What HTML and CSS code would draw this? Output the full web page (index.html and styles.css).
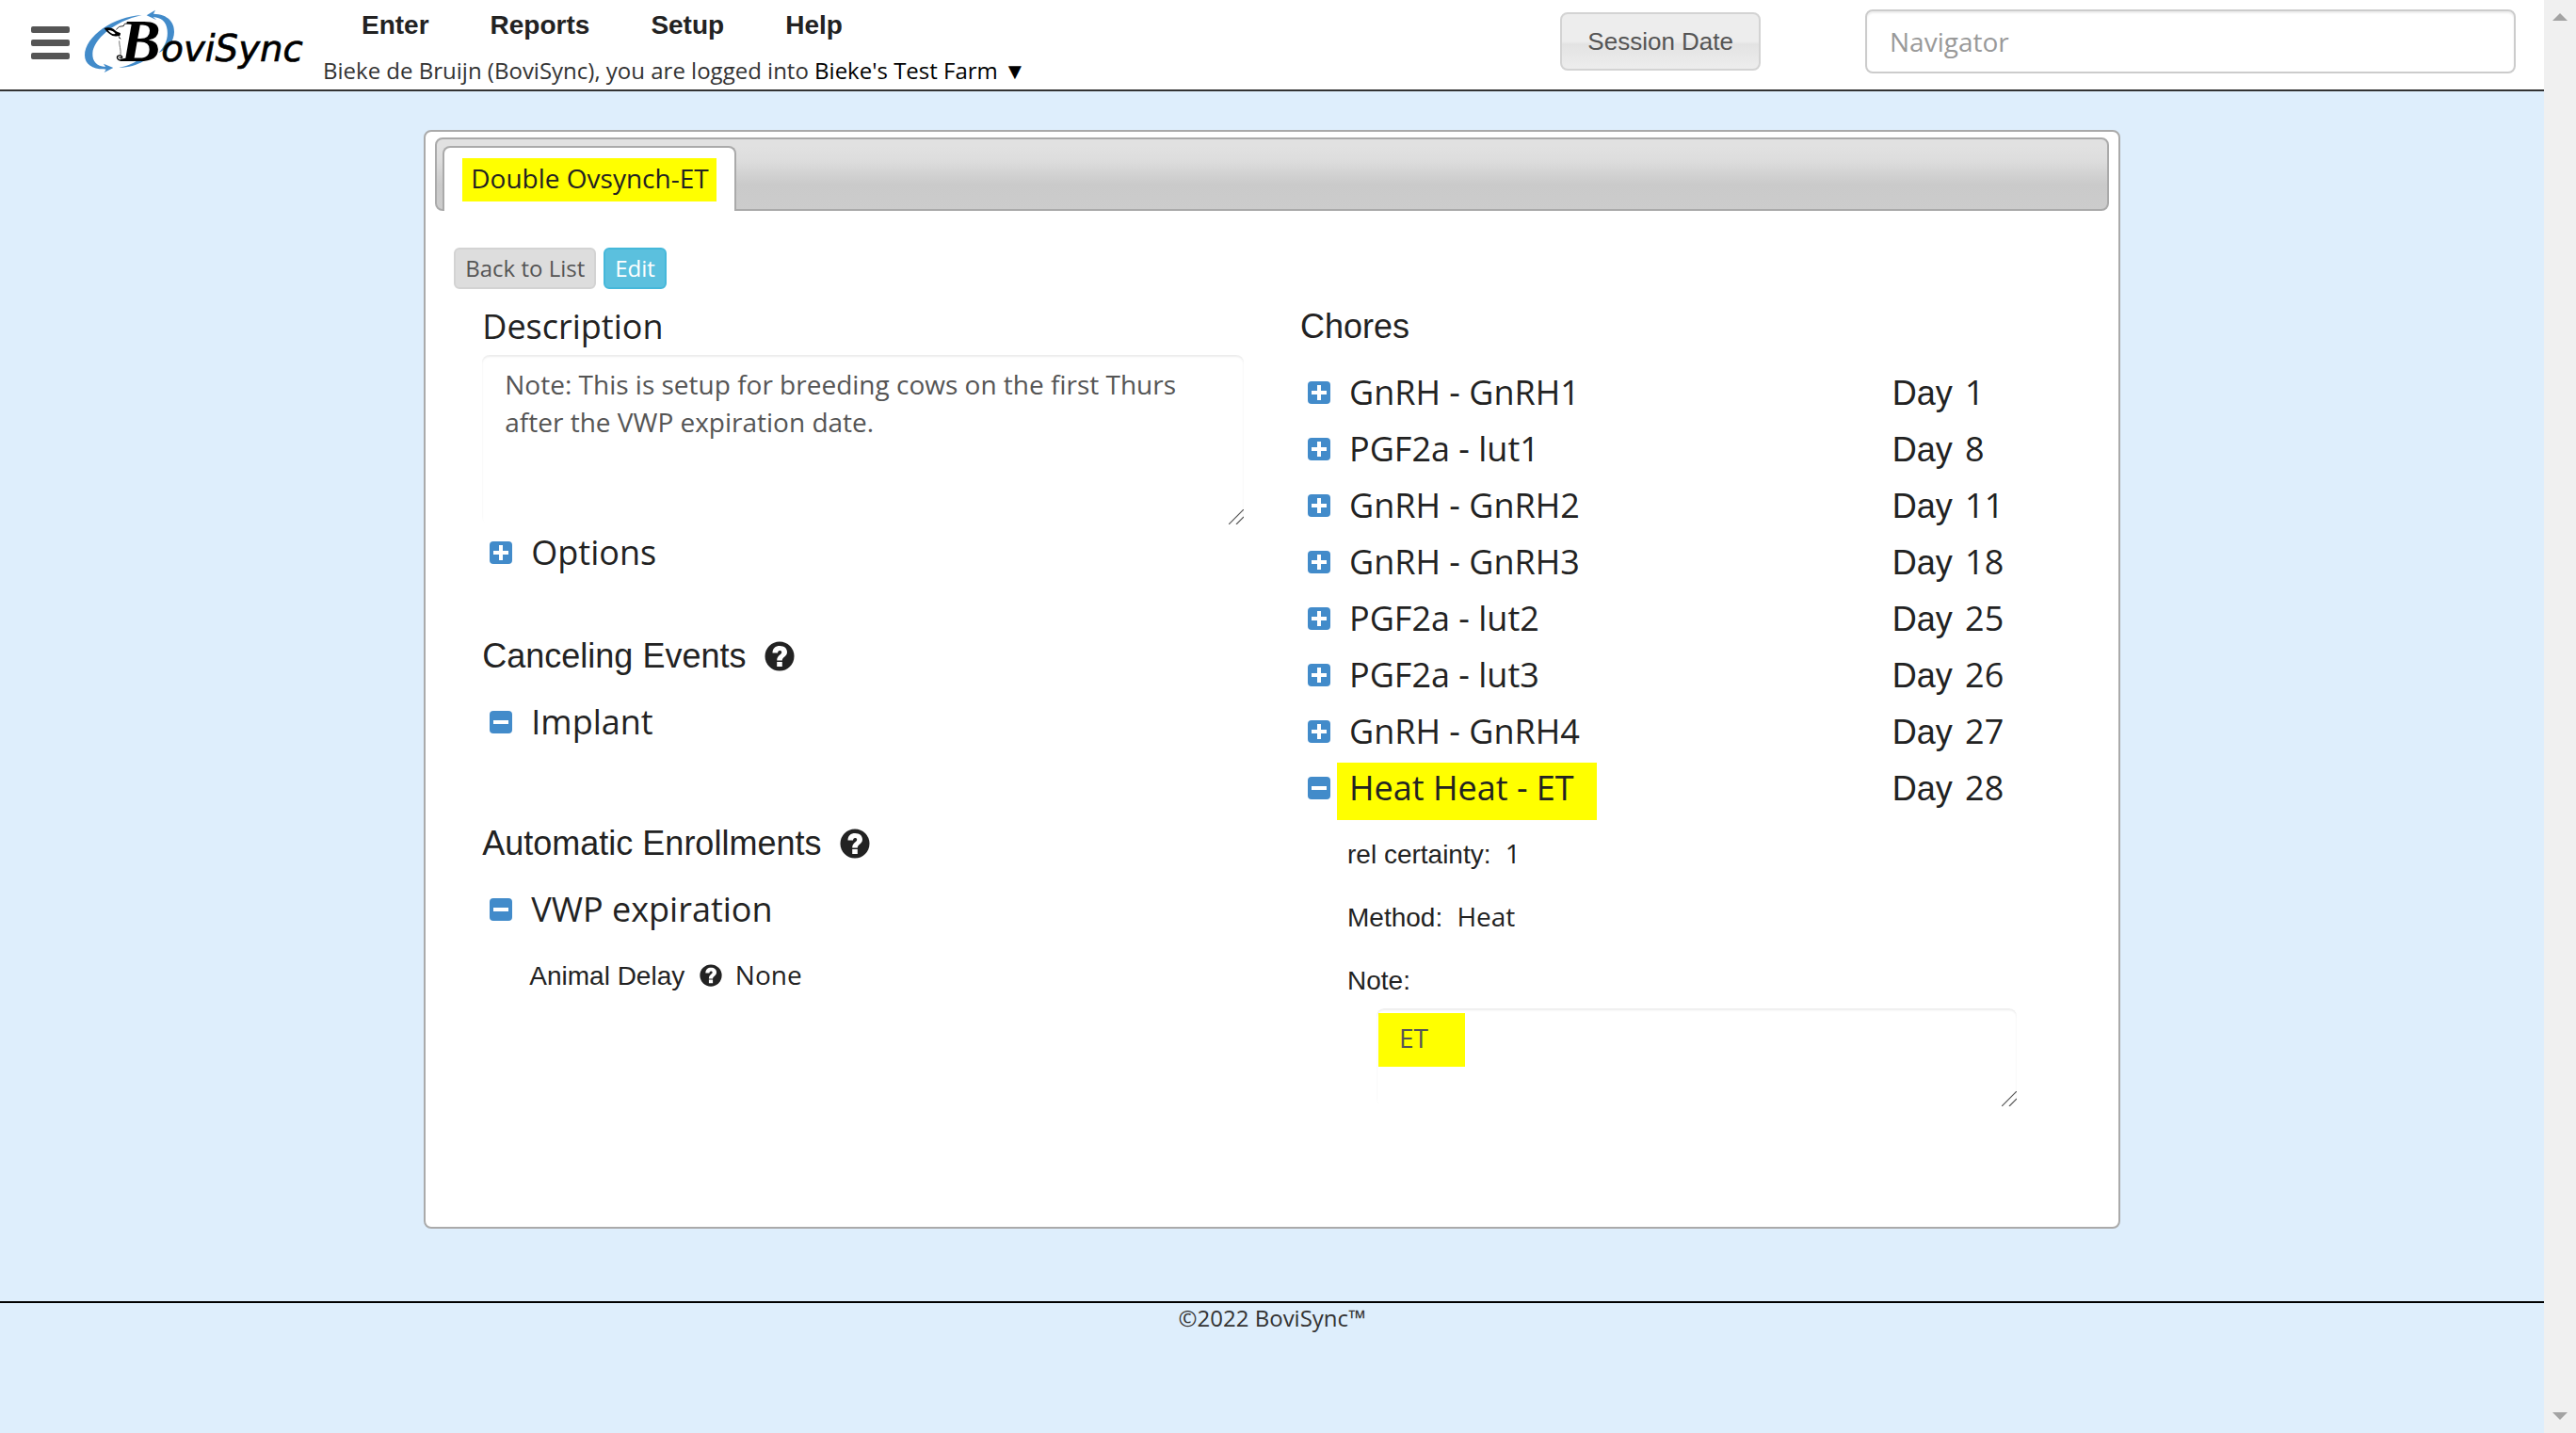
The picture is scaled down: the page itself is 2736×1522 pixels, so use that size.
FILE: index.html
```html
<!DOCTYPE html>
<html lang="en">
<head>
    <meta charset="UTF-8">
    <meta name="viewport" content="width=device-width, initial-scale=1.0">
    <title>BoviSync</title>
    <link rel="stylesheet" href="styles.css">
</head>
<body>
    <svg class="sprite" aria-hidden="true">
        <symbol id="plus" viewBox="0 0 24 24">
            <rect width="24" height="24" rx="4" fill="#428bca"/>
            <path d="M10 4h4v6h6v4h-6v6h-4v-6H4v-4h6z" fill="#fff"/>
        </symbol>
        <symbol id="minus" viewBox="0 0 24 24">
            <rect width="24" height="24" rx="4" fill="#428bca"/>
            <path d="M4 10h16v4H4z" fill="#fff"/>
        </symbol>
        <symbol id="help" viewBox="0 0 32 32">
            <circle cx="16" cy="16" r="15.5" fill="#222"/>
            <path d="M8.5 12.5C8.5 7.5 11.500 5 16.300 5C21 5 24 7.800 24 11.500C24 16.500 18.800 16.800 18.800 20.500H13.200C13.200 15 18.200 14.500 18.200 11.800C18.200 10.600 17.400 10 16.200 10C14.800 10 14.200 11 14 12.500zM13.200 22h5.600v5h-5.600z" fill="#fff"/>
        </symbol>
        <symbol id="grip" viewBox="0 0 16 16">
            <path d="M0 16L16 0M8 16L16 8" stroke="#555" stroke-width="1.2" fill="none"/>
        </symbol>
    </svg>

    <div class="page">
        <header class="topbar">
            <button class="menu-toggle" aria-label="Menu">
                <span></span>
                <span></span>
                <span></span>
            </button>
            <a class="logo" href="#" aria-label="BoviSync">
                <svg width="240" height="76" viewBox="0 0 720 228">
                    <g fill="#428bca">
                        <path d="M200 30C110 34 18 98 18 158C18 186 42 202 78 202L86 203L80 213L109 198L78 185L84 195C56 192 42 178 43 152C46 108 110 50 200 30z"/>
                        <path d="M215 31L243 14L237 26C284 27 304 54 303 84C302 112 288 134 254 150C276 126 284 104 281 78C278 50 262 38 236 36L247 46z"/>
                        <path d="M126 198C160 196 182 190 206 176L186 174C170 186 152 192 126 198z"/>
                    </g>
                    <path d="M122 72L145 58L180 56L176 170L136 172L126 120z" fill="#fff"/>
                    <path d="M80 72C92 68 106 70 114 78C120 84 126 84 132 88C132 96 128 100 124 96C110 102 92 90 80 72zM92 78C98 88 108 92 116 90C112 82 102 78 92 78z" fill-rule="evenodd"/>
                    <path d="M118 76L128 67L141 65M141 66L145 58L172 55" fill="none" stroke="#000" stroke-width="2.500"/>
                    <path d="M125 97L131 103L134 107L128 104z"/>
                    <path d="M128 112C128 128 134 140 132 157" fill="none" stroke="#555" stroke-width="2.500"/>
                    <path d="M136 173C124 176 118 166 124 160C132 156 140 162 136 168M128 166h6M134 174L160 172" fill="none" stroke="#000" stroke-width="4"/>
                    <text class="logo-initial" x="132" y="177">B</text>
                    <text class="logo-name" x="262" y="177">oviSync</text>
                </svg>
            </a>
            <div class="topbar-middle">
                <nav class="main-nav">
                    <a href="#">Enter</a>
                    <a href="#">Reports</a>
                    <a href="#">Setup</a>
                    <a href="#">Help</a>
                </nav>
                <p class="login-info">Bieke de Bruijn (BoviSync), you are logged into <a href="#">Bieke's Test Farm ▼</a></p>
            </div>
            <button class="session-date">Session Date</button>
            <input class="navigator" type="text" placeholder="Navigator" aria-label="Navigator">
        </header>

        <main class="panel">
            <div class="tabs">
                <a class="tab" href="#"><mark>Double Ovsynch-ET</mark></a>
            </div>
            <div class="panel-body">
                <div class="actions">
                    <button class="btn btn-default">Back to List</button>
                    <button class="btn btn-info">Edit</button>
                </div>
                <div class="columns">
                    <section class="column">
                        <h4><label for="description">Description</label></h4>
                        <div class="textarea-wrap">
                            <textarea id="description" class="description" readonly>Note: This is setup for breeding cows on the first Thurs after the VWP expiration date.</textarea>
                            <svg class="grip"><use href="#grip"/></svg>
                        </div>
                        <div class="item">
                            <button class="toggle" aria-label="Expand"><svg><use href="#plus"/></svg></button>
                            <span>Options</span>
                        </div>

                        <h4 class="arial canceling">Canceling Events <svg class="help"><use href="#help"/></svg></h4>
                        <div class="item">
                            <button class="toggle" aria-label="Collapse"><svg><use href="#minus"/></svg></button>
                            <span>Implant</span>
                        </div>

                        <h4 class="arial enrollments">Automatic Enrollments <svg class="help"><use href="#help"/></svg></h4>
                        <div class="item">
                            <button class="toggle" aria-label="Collapse"><svg><use href="#minus"/></svg></button>
                            <span>VWP expiration</span>
                        </div>
                        <div class="details">
                            <p><b>Animal Delay</b> <svg class="help-small"><use href="#help"/></svg> <span>None</span></p>
                        </div>
                    </section>

                    <section class="column">
                        <h4 class="arial chores">Chores</h4>
                        <div class="item">
                            <button class="toggle" aria-label="Expand"><svg><use href="#plus"/></svg></button>
                            <span>GnRH - GnRH1</span>
                            <span class="day"><b>Day</b> 1</span>
                        </div>
                        <div class="item">
                            <button class="toggle" aria-label="Expand"><svg><use href="#plus"/></svg></button>
                            <span>PGF2a - lut1</span>
                            <span class="day"><b>Day</b> 8</span>
                        </div>
                        <div class="item">
                            <button class="toggle" aria-label="Expand"><svg><use href="#plus"/></svg></button>
                            <span>GnRH - GnRH2</span>
                            <span class="day"><b>Day</b> 11</span>
                        </div>
                        <div class="item">
                            <button class="toggle" aria-label="Expand"><svg><use href="#plus"/></svg></button>
                            <span>GnRH - GnRH3</span>
                            <span class="day"><b>Day</b> 18</span>
                        </div>
                        <div class="item">
                            <button class="toggle" aria-label="Expand"><svg><use href="#plus"/></svg></button>
                            <span>PGF2a - lut2</span>
                            <span class="day"><b>Day</b> 25</span>
                        </div>
                        <div class="item">
                            <button class="toggle" aria-label="Expand"><svg><use href="#plus"/></svg></button>
                            <span>PGF2a - lut3</span>
                            <span class="day"><b>Day</b> 26</span>
                        </div>
                        <div class="item">
                            <button class="toggle" aria-label="Expand"><svg><use href="#plus"/></svg></button>
                            <span>GnRH - GnRH4</span>
                            <span class="day"><b>Day</b> 27</span>
                        </div>
                        <div class="item">
                            <button class="toggle" aria-label="Collapse"><svg><use href="#minus"/></svg></button>
                            <span><mark>Heat Heat - ET</mark></span>
                            <span class="day"><b>Day</b> 28</span>
                        </div>
                        <div class="details">
                            <p><b>rel certainty:</b> <span>1</span></p>
                            <p><b>Method:</b> <span>Heat</span></p>
                            <p><label for="note">Note:</label></p>
                            <div class="textarea-wrap note-wrap">
                                <textarea id="note" class="note" readonly>ET</textarea>
                                <svg class="grip"><use href="#grip"/></svg>
                            </div>
                        </div>
                    </section>
                </div>
            </div>
        </main>

        <footer>©2022 BoviSync™</footer>
    </div>

    <div class="scrollbar" aria-hidden="true">
        <svg width="16" height="8" viewBox="0 0 16 8"><path d="M0 8L8 0L16 8z" fill="#a3a3a3"/></svg>
        <svg width="16" height="8" viewBox="0 0 16 8"><path d="M0 0L8 8L16 0z" fill="#a3a3a3"/></svg>
    </div>
</body>
</html>
```
FILE: styles.css
```css
* {
    box-sizing: border-box;
}

body {
    margin: 0;
    display: flex;
    min-height: 100vh;
    background-color: #deeefc;
    color: #222;
    font-family: "Open Sans", sans-serif;
    font-size: 28px;
    line-height: 40px;
}

a {
    color: inherit;
    text-decoration: none;
}

p, h4 {
    margin: 0;
}

button, input, textarea {
    font-family: inherit;
    font-size: inherit;
}

button {
    cursor: pointer;
}

mark {
    background-color: #ff0;
    color: inherit;
}

.sprite {
    position: absolute;
    width: 0;
    height: 0;
}

.page {
    flex: 1;
    min-width: 0;
}

/* top bar */
.topbar {
    display: flex;
    align-items: flex-start;
    height: 97px;
    padding-right: 30px;
    background-color: #fff;
    border-bottom: 2px solid #333;
}

.menu-toggle {
    display: flex;
    flex-direction: column;
    gap: 7px;
    margin: 28px 10px 0 33px;
    padding: 0;
    border: 0;
    background: none;
}

.menu-toggle span {
    width: 41px;
    height: 7px;
    border-radius: 2px;
    background-color: #555;
}

.logo {
    margin-top: 6px;
}

.logo svg {
    display: block;
}

.logo-initial {
    font: italic bold 192px "Liberation Serif", serif;
}

.logo-name {
    font: italic 116px "DejaVu Sans", sans-serif;
    stroke: #000;
    stroke-width: 2px;
}

.topbar-middle {
    flex: 1;
    padding: 7px 0 0 19px;
}

.main-nav {
    display: flex;
    gap: 65px;
    padding-left: 41px;
    font: bold 28px/40px "Liberation Sans", sans-serif;
}

.login-info {
    margin-top: 8px;
    font-size: 24px;
    color: #333;
}

.login-info a {
    color: #000;
}

.session-date {
    height: 62px;
    margin: 13px 111px 0 0;
    padding: 0 27px;
    border: 2px solid #d3d3d3;
    border-radius: 8px;
    background: linear-gradient(#ededed 50%, #e3e3e3 55%, #ededed);
    color: #555;
    font: 26px "Liberation Sans", sans-serif;
}

.navigator {
    width: 691px;
    height: 68px;
    margin-top: 10px;
    padding: 0 24px;
    border: 2px solid #ccc;
    border-radius: 8px;
    box-shadow: inset 0 2px 2px rgba(0, 0, 0, 0.075);
}

.navigator::placeholder {
    color: #999;
}

/* main panel */
.panel {
    width: 66.67%;
    margin: 41px auto 77px;
    padding: 6px 10px 128px;
    background-color: #fff;
    border: 2px solid #aaa;
    border-radius: 8px;
}

.tabs {
    display: flex;
    align-items: flex-end;
    height: 78px;
    padding: 7px 6px 0;
    border: 2px solid #aaa;
    border-radius: 8px;
    background: linear-gradient(#e1e1e1 10%, #ddd 30%, #cacaca 65%, #ccc);
}

.tab {
    height: 69px;
    margin-bottom: -2px;
    padding: 11px 19px;
    border: 2px solid #aaa;
    border-bottom: 0;
    border-radius: 8px 8px 0 0;
    background-color: #fff;
}

.tab mark {
    display: block;
    padding: 1px 8px 5px 9px;
}

.panel-body {
    padding: 39px 20px 0;
}

.actions {
    display: flex;
    gap: 8px;
    margin-bottom: 20px;
}

.btn {
    height: 44px;
    padding: 0 10px;
    border: 2px solid;
    border-radius: 6px;
    font-size: 24px;
    line-height: 36px;
}

.btn-default {
    border-color: #d3d3d3;
    background-color: #ddd;
    color: #555;
}

.btn-info {
    border-color: #46b8da;
    background-color: #5bc0de;
    color: #fff;
}

.columns {
    display: grid;
    grid-template-columns: 1fr 1fr;
}

.column {
    padding: 0 30px;
}

h4 {
    margin-bottom: 20px;
    font-size: 36px;
    font-weight: normal;
}

h4:first-child {
    margin-bottom: 10px;
}

h4.chores {
    margin-bottom: 20px;
}

.arial, .details b, .details label, .day b {
    font-family: "Liberation Sans", sans-serif;
    font-weight: normal;
}

.canceling {
    margin-top: 60px;
}

.enrollments {
    margin-top: 79px;
}

.help {
    width: 32px;
    height: 32px;
    margin-left: 10px;
    vertical-align: -4px;
}

.help-small {
    width: 24px;
    height: 24px;
    margin: 0 7px 0 8px;
    vertical-align: -2px;
}

.item {
    display: flex;
    align-items: center;
    padding-left: 8px;
    font-size: 36px;
    line-height: 60px;
}

.item mark {
    margin-left: -13px;
    padding: 2px 24px 10px 13px;
}

.toggle {
    display: flex;
    margin-right: 20px;
    padding: 0;
    border: 0;
    background: none;
}

.toggle svg {
    width: 24px;
    height: 24px;
}

.day {
    width: 180px;
    margin-left: auto;
}

.day b {
    margin-right: 4px;
    line-height: 40px;
}

.textarea-wrap {
    position: relative;
    display: flex;
}

textarea {
    width: 100%;
    padding: 11px 24px;
    border: 0;
    border-radius: 8px;
    outline: 0;
    resize: none;
    overflow: hidden;
    background-color: #fff;
    box-shadow: inset 0 2px 2px rgba(0, 0, 0, 0.075);
    color: #555;
    line-height: 40px;
}

.description {
    height: 180px;
}

.note {
    height: 104px;
    background: linear-gradient(#ff0, #ff0) 2px 5px / 92px 57px no-repeat #fff;
}

.grip {
    position: absolute;
    right: 0;
    bottom: 0;
    width: 16px;
    height: 16px;
}

.details {
    display: flex;
    flex-direction: column;
    gap: 27px;
    padding: 19px 0 0 50px;
}

.details b, .details label {
    line-height: 30px;
}

.details b + span {
    margin-left: 8px;
}

.note-wrap {
    margin: -16px 48px 0 31px;
}

footer {
    border-top: 2px solid #000;
    color: #333;
    font-size: 24px;
    line-height: 32px;
    text-align: center;
}

.scrollbar {
    display: flex;
    flex-direction: column;
    justify-content: space-between;
    align-items: center;
    width: 34px;
    padding: 14px 0;
    background-color: #f0f0f0;
}
```
